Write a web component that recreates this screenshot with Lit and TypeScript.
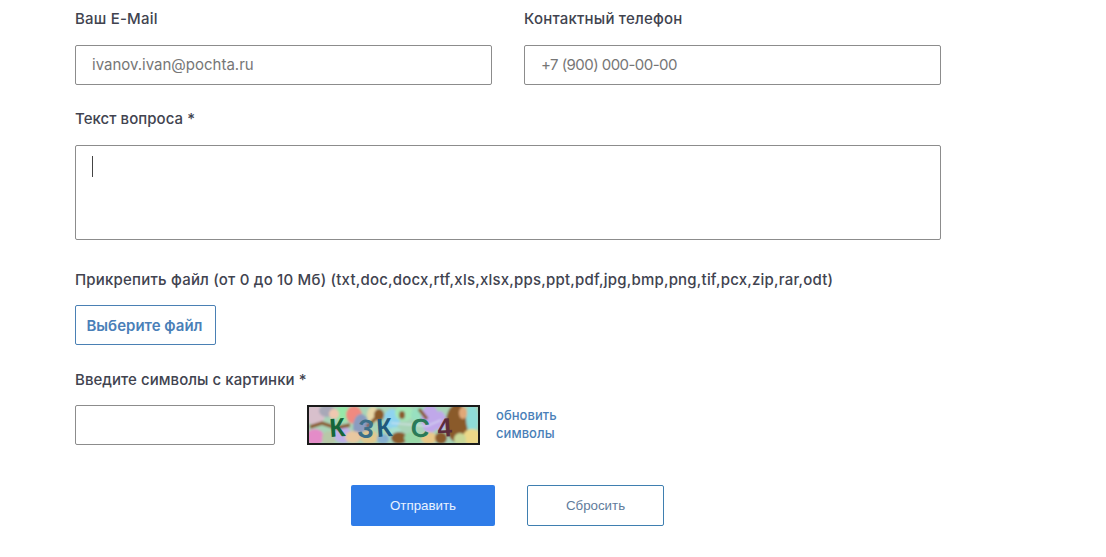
import { LitElement, html, css, svg } from "lit";
import { customElement } from "lit/decorators.js";

const blobs: [number, number, number, number, string][] = [
  [8, 10, 10, 10, "#d8c0cc"], [20, 6, 8, 6, "#a8a8b8"], [8, 32, 9, 8, "#e48cc8"], [22, 33, 7, 7, "#b8c8a8"],
  [36, 9, 7, 8, "#98e8a8"], [27, 9, 5, 5, "#f0c8b0"], [47, 10, 8, 9, "#f08a80"], [36, 30, 9, 8, "#c0b0e8"],
  [54, 22, 8, 13, "#8a9cc0"], [46, 32, 8, 6, "#e8c8a0"], [62, 32, 9, 7, "#e0c890"], [66, 10, 6, 8, "#e8d8a8"],
  [72, 10, 5, 6, "#8a5a2c"], [85, 14, 8, 10, "#8fd4f0"], [88, 30, 7, 8, "#a8e0d0"], [76, 34, 6, 5, "#88b0d0"],
  [97, 8, 9, 8, "#a4e8b8"], [95, 10, 3, 4, "#8a5a2c"], [92, 33, 8, 6, "#8a5a2c"], [112, 10, 8, 8, "#98e0c0"],
  [106, 33, 9, 6, "#98d8a8"], [123, 14, 9, 14, "#c0a8ea"], [122, 33, 8, 6, "#e8c888"], [133, 16, 6, 10, "#c0a8ea"],
  [150, 18, 11, 19, "#8a5a2c"], [134, 33, 6, 6, "#8a5a2c"], [165, 14, 6, 14, "#8fdcd8"], [156, 8, 4, 6, "#e0a878"],
  [165, 32, 9, 8, "#ecd888"], [153, 34, 6, 6, "#c8d898"],
];

const glyphs: [string, number, number, number, string][] = [
  ["К", 23, 32, -4, "#14663a"], ["З", 50, 32, 5, "#3c6f88"], ["К", 70, 32, -4, "#1f5a7c"],
  ["С", 103, 31, 5, "#2a7a58"], ["4", 131, 32, -4, "#5c2c3c"],
];

@customElement("app-root")
export class AppRoot extends LitElement {
  static styles = css`
    :host {
      display: block;
      width: 1106px;
      height: 557px;
      background: #fff;
      overflow: hidden;
      box-sizing: border-box;
      padding: 9px 0 0 75px;
      font-family: Inter, "Noto Sans", sans-serif;
      color: #41434f;
    }
    .form { display: flex; flex-direction: column; width: 866px; }
    .row { display: flex; gap: 32px; }
    .col { width: 417px; display: flex; flex-direction: column; }
    .label {
      font-size: 15px;
      font-weight: 500;
      line-height: 20px;
      letter-spacing: 0.2px;
      height: 20px;
      margin: 0 0 16px;
      white-space: nowrap;
    }
    .tight { letter-spacing: 0.05px; }
    .field {
      box-sizing: border-box;
      height: 40px;
      border: 1px solid #8c8c8c;
      border-radius: 2px;
      padding: 0 16px 2px;
      display: flex;
      align-items: center;
      font-size: 15px;
      color: #767676;
      background: #fff;
    }
    .tel { letter-spacing: -0.55px; }
    .gap-q { margin-top: 24px; }
    .area {
      box-sizing: border-box;
      height: 95px;
      border: 1px solid #8c8c8c;
      border-radius: 2px;
      padding: 10px 16px;
    }
    .caret { width: 1px; height: 21px; background: #444; }
    .gap-file { margin-top: 30px; }
    .label.file { margin-bottom: 15px; }
    .file-btn {
      box-sizing: border-box;
      width: 141px;
      height: 40px;
      border: 1px solid #4a80b4;
      border-radius: 2px;
      padding-right: 2px;
      display: flex;
      align-items: center;
      justify-content: center;
      font-size: 15px;
      font-weight: 600;
      color: #4a7fb8;
    }
    .gap-cap { margin: 25px 0 15px; }
    .cap { display: flex; align-items: center; }
    .cap-input { width: 200px; padding: 0; }
    .cap-img {
      display: block;
      width: 173px;
      height: 40px;
      margin-left: 32px;
      flex: none;
    }
    .refresh {
      margin: 0 0 2px 16px;
      font-size: 13px;
      font-weight: 500;
      line-height: 18px;
      letter-spacing: 0.05px;
      color: #4a7fb8;
    }
    .actions { display: flex; margin: 40px 0 0 276px; gap: 32px; }
    .btn {
      box-sizing: border-box;
      height: 41px;
      border-radius: 2px;
      display: flex;
      align-items: center;
      justify-content: center;
      font-family: "Liberation Sans", Arial, sans-serif;
      font-size: 13.33px;
    }
    .send { width: 144px; background: #2f7ce8; color: #e8f2ff; }
    .reset { width: 137px; border: 1px solid #3f7fb0; color: #5f7c9c; }
  `;

  private captcha() {
    return html`<svg class="cap-img" viewBox="0 0 173 40" role="img" aria-label="captcha">
      <defs><filter id="soft"><feGaussianBlur stdDeviation="0.8" /></filter></defs>
      <g filter="url(#soft)">
        <rect width="173" height="40" fill="#a9d4b8" />
        ${blobs.map(([x, y, rx, ry, c]) => svg`<ellipse cx=${x} cy=${y} rx=${rx} ry=${ry} fill=${c} />`)}
        <path d="M3 22l12-4 14 5 14-3M60 22l10-10M112 4l8 10" stroke="#8a5a2c" stroke-width="3.5" fill="none" />
        <path d="M84 18l36 3 14-6" stroke="#dfe8f4" stroke-width="1" fill="none" />
      </g>
      ${glyphs.map(([t, x, y, r, c]) => svg`<text x=${x} y=${y} transform="rotate(${r} ${x} ${y})" fill=${c}
        font-family="Liberation Sans, sans-serif" font-size="26" font-weight="700">${t}</text>`)}
      <rect x="1" y="1" width="171" height="38" fill="none" stroke="#1a1a1a" stroke-width="2" />
    </svg>`;
  }

  render() {
    return html`<div class="form">
      <div class="row">
        <div class="col">
          <div class="label">Ваш E-Mail</div>
          <div class="field">ivanov.ivan@pochta.ru</div>
        </div>
        <div class="col">
          <div class="label">Контактный телефон</div>
          <div class="field tel">+7 (900) 000-00-00</div>
        </div>
      </div>
      <div class="label gap-q tight">Текст вопроса *</div>
      <div class="area"><div class="caret"></div></div>
      <div class="label file gap-file">Прикрепить файл (от 0 до 10 Мб) (txt,doc,docx,rtf,xls,xlsx,pps,ppt,pdf,jpg,bmp,png,tif,pcx,zip,rar,odt)</div>
      <div class="file-btn">Выберите файл</div>
      <div class="label gap-cap tight">Введите символы с картинки *</div>
      <div class="cap">
        <div class="field cap-input"></div>
        ${this.captcha()}
        <div class="refresh">обновить<br />символы</div>
      </div>
      <div class="actions">
        <div class="btn send">Отправить</div>
        <div class="btn reset">Сбросить</div>
      </div>
    </div>`;
  }
}
